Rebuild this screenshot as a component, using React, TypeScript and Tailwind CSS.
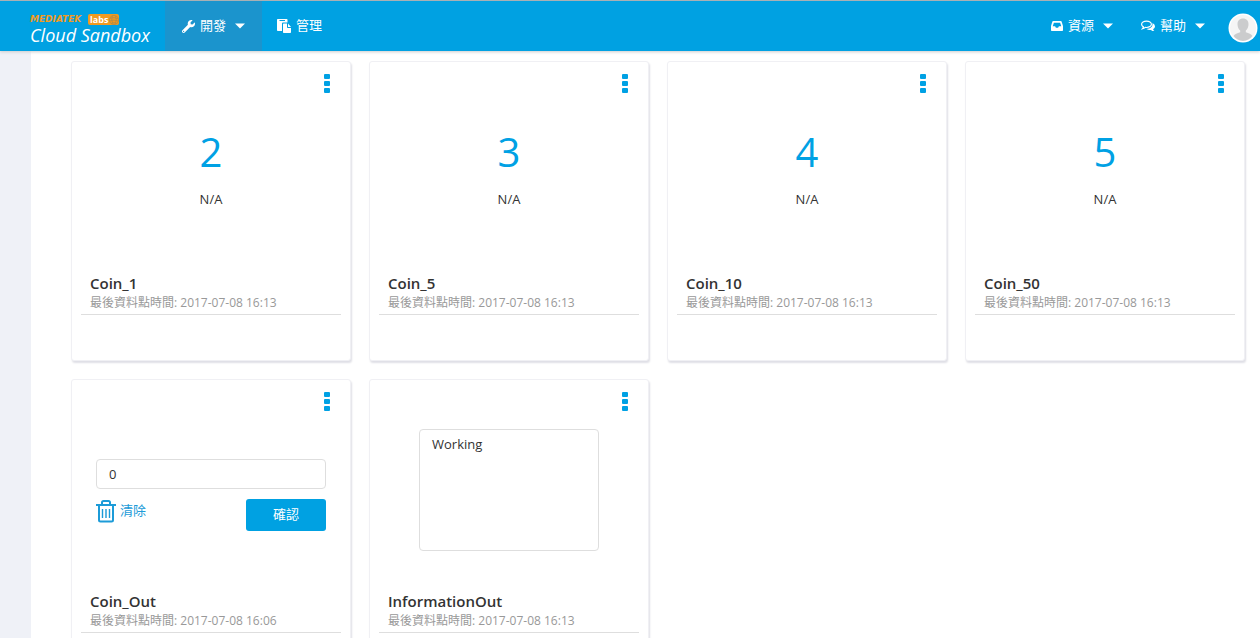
import type { ReactNode } from "react";
import { FaWrench } from "react-icons/fa";

function Caret() {
  return (
    <svg viewBox="0 0 10 6" className="h-[6px] w-[10px]" fill="currentColor" aria-hidden="true">
      <path d="M0 0.500h10L5 5.500z" />
    </svg>
  );
}

function PasteIcon() {
  return (
    <svg viewBox="0 0 14 14" className="size-[14px]" aria-hidden="true">
      <path fill="currentColor" fillRule="evenodd" d="M.8 0h8.900q.8 0 .8.800V3.500H6Q5 3.500 5 4.500V12H.8Q0 12 0 11.200V.8Q0 0 .8 0zM2.500 1v1H8V1z" />
      <path fill="currentColor" fillRule="evenodd" d="M6.700 4.500H10V8.200q0 .8.800.8H14v4.200q0 .8-.8.800H6.700q-.7 0-.7-.8V5.300q0-.8.700-.8zM11 4.500 14 8h-3z" />
    </svg>
  );
}

function InboxIcon() {
  return (
    <svg viewBox="0 0 12 10" className="h-[10px] w-[12px]" aria-hidden="true">
      <path fill="currentColor" fillRule="evenodd" d="M2.200 0h7.600q.6 0 .8.500L12 5v4.200q0 .8-.8.800H.8Q0 10 0 9.200V5L1.400.5Q1.600 0 2.200 0zM2.900 1.700 1.700 5.200h2.400l.8 1.600h2.200l.8-1.600h2.400L9.100 1.700z" />
    </svg>
  );
}

function CommentsIcon() {
  return (
    <svg viewBox="0 0 14 12" className="h-[12px] w-[14px]" aria-hidden="true">
      <path fill="none" stroke="currentColor" strokeWidth="1.200" d="M5.500 1.100c2.700 0 4.900 1.400 4.900 3.200S8.200 7.500 5.500 7.500q-.7 0-1.300-.1Q3 8.400 1.600 8.700q.7-.8.800-1.800C1.200 6.300.6 5.400.6 4.300c0-1.800 2.200-3.200 4.900-3.200z" />
      <path fill="currentColor" d="M11.500 2.900Q14 4.100 14 6.300c0 1.200-.7 2.200-1.900 2.900q.2 1 1.300 1.900-2.100 0-3.500-1.200-2.500.4-4.400-.9c3.600 0 6-2 6-4.700q0-.8 0-1.400z" />
    </svg>
  );
}

function Globe() {
  return (
    <svg viewBox="0 0 10 10" className="size-[10px]" fill="none" stroke="#a8894f" strokeWidth="0.700" aria-hidden="true">
      <circle cx="5" cy="5" r="4.600" fill="#f39a1e" />
      <path d="M1 3.200Q5 1.800 9 3.600M.5 6Q5 4.200 9.400 6M2 8.400Q5 6.800 8 8.400M3.400.8Q1.600 5 4.200 9.400M6.400.8Q8.600 5 5.800 9.400" />
    </svg>
  );
}

function Logo() {
  return (
    <a href="#home" className="flex w-[135px] flex-col pt-[13px]">
      <span className="flex h-[11px] items-center gap-[2px]">
        <span className="w-[56px] font-['DejaVu_Sans',sans-serif] text-[9px] leading-[11px] font-bold whitespace-nowrap text-[#f39a1e] italic">MEDIATEK</span>
        <span className="flex h-[11px] items-center gap-[1px] rounded-[2px] bg-[#f39a1e] pl-[2px] text-[9px] leading-[11px] font-bold text-white">
          labs
          <Globe />
        </span>
      </span>
      <span className="text-[18px] leading-[20px] whitespace-nowrap text-white italic">Cloud Sandbox</span>
    </a>
  );
}

function NavItem({ icon, label, caret, className }: { icon: ReactNode; label: string; caret?: boolean; className: string }) {
  return (
    <button type="button" className={`flex h-full items-center text-[13px] text-white ${className}`}>
      {icon}
      <span className="ml-[5px]">{label}</span>
      {caret && (
        <span className="ml-[9px]">
          <Caret />
        </span>
      )}
    </button>
  );
}

function Avatar() {
  return (
    <svg viewBox="0 0 30 30" className="mt-[4px] size-[30px]" aria-hidden="true">
      <circle cx="15" cy="15" r="14.500" fill="#fff" />
      <circle cx="15" cy="15" r="13" fill="#f5f5f5" />
      <path d="M15 5.500c3.500 0 5.500 2.300 5.500 5.700 0 2.700-1.200 5-2.700 6.300v1.800c3 .8 5.600 1.800 6.600 3.600A13 13 0 0 1 15 28a13 13 0 0 1-9.400-5.100c1-1.800 3.600-2.800 6.600-3.600v-1.800c-1.500-1.300-2.700-3.600-2.700-6.300 0-3.400 2-5.700 5.500-5.700z" fill="#cbcccd" />
    </svg>
  );
}

function TrashIcon() {
  return (
    <svg viewBox="0 0 20 24" className="h-[24px] w-[20px]" fill="none" stroke="currentColor" strokeWidth="2" aria-hidden="true">
      <path d="M0 6h20M6 5.500V3.500Q6 2 7.500 2h5Q14 2 14 3.500v2M3 6v15q0 1.500 1.500 1.500h11Q17 22.500 17 21V6" />
      <path d="M6.500 10v9M10 10v9M13.500 10v9" strokeWidth="1.400" />
    </svg>
  );
}

function Card({ title, time, children }: { title: string; time: string; children: ReactNode }) {
  return (
    <article className="flex h-[300px] flex-col rounded-[3px] border border-[#f0f0f4] bg-white px-[9px] shadow-[1px_2px_2px_#dfdfe6]">
      <div className="flex h-[48px] justify-end pt-[10px] pr-[9px]">
        <button type="button" aria-label={`${title} options`} className="flex h-[24px] w-[10px] justify-center text-[#00a1e4]">
          <svg viewBox="0 0 6 24" className="h-[24px] w-[6px]" fill="currentColor" aria-hidden="true">
            <rect y="2" width="6" height="5" rx="1" />
            <rect y="9" width="6" height="5" rx="1" />
            <rect y="16" width="6" height="5" rx="1" />
          </svg>
        </button>
      </div>
      <div className="h-[163px]">{children}</div>
      <footer className="border-b border-[#dedede] px-[9px] pb-[2px]">
        <h2 className="text-[15px] leading-[20px] font-semibold text-[#333]">{title}</h2>
        <p className="text-[12px] leading-[19px] text-[#999]">最後資料點時間: {time}</p>
      </footer>
    </article>
  );
}

function ValueDisplay({ value }: { value: string }) {
  return (
    <div className="flex flex-col items-center pt-[18px]">
      <strong className="text-[40px] leading-[48px] font-normal text-[#00a1e4]">{value}</strong>
      <span className="mt-[13px] text-[13px] leading-[20px] text-[#333]">N/A</span>
    </div>
  );
}

const counters = [
  { title: "Coin_1", value: "2" },
  { title: "Coin_5", value: "3" },
  { title: "Coin_10", value: "4" },
  { title: "Coin_50", value: "5" },
];

export default function App() {
  return (
    <div className="flex min-h-screen flex-col bg-white font-['Open_Sans','Noto_Sans_CJK_TC',sans-serif]">
      <header className="relative flex h-[51px] items-stretch border-t border-[#a9b0b4] bg-[#00a1e2] pl-[30px] shadow-[0_1px_3px_#ccc]">
        <Logo />
        <nav className="flex flex-1 items-stretch">
          <NavItem icon={<FaWrench className="size-[13px]" />} label="開發" caret className="bg-[#1b94cd] px-[17px]" />
          <NavItem icon={<PasteIcon />} label="管理" className="px-[15px]" />
          <span className="flex-1" />
          <NavItem icon={<InboxIcon />} label="資源" caret className="px-[14px]" />
          <NavItem icon={<CommentsIcon />} label="幫助" caret className="pr-[23px] pl-[14px]" />
        </nav>
        <button type="button" aria-label="Account" className="flex items-center pr-[2px]">
          <Avatar />
        </button>
      </header>
      <div className="flex flex-1 items-stretch">
        <aside className="w-[31px] shrink-0 bg-[#eff1f7]" />
        <main className="grid flex-1 grid-cols-[repeat(auto-fill,minmax(280px,1fr))] content-start gap-[18px] pt-[10px] pr-[15px] pl-[40px]">
          {counters.map((counter) => (
            <Card key={counter.title} title={counter.title} time="2017-07-08 16:13">
              <ValueDisplay value={counter.value} />
            </Card>
          ))}
          <Card title="Coin_Out" time="2017-07-08 16:06">
            <form className="mx-auto flex w-[230px] flex-col gap-[10px] pt-[31px]">
              <input
                type="text"
                aria-label="Coin_Out"
                defaultValue="0"
                className="h-[30px] w-full rounded-[4px] border border-[#dedede] px-[12px] text-[13px] text-[#333]"
              />
              <div className="flex items-start justify-between">
                <button type="button" className="flex items-start gap-[4px] text-[13px] leading-[22px] text-[#1c9bd8]">
                  <TrashIcon />
                  清除
                </button>
                <button type="button" className="h-[32px] w-[80px] rounded-[3px] bg-[#00a1e2] text-[13px] text-white">
                  確認
                </button>
              </div>
            </form>
          </Card>
          <Card title="InformationOut" time="2017-07-08 16:13">
            <div className="flex justify-center pt-[1px]">
              <textarea
                aria-label="InformationOut"
                readOnly
                defaultValue="Working"
                className="h-[122px] w-[180px] resize-none rounded-[4px] border border-[#dedede] px-[12px] py-[4px] text-[13px] leading-[20px] text-[#333]"
              />
            </div>
          </Card>
        </main>
      </div>
    </div>
  );
}
